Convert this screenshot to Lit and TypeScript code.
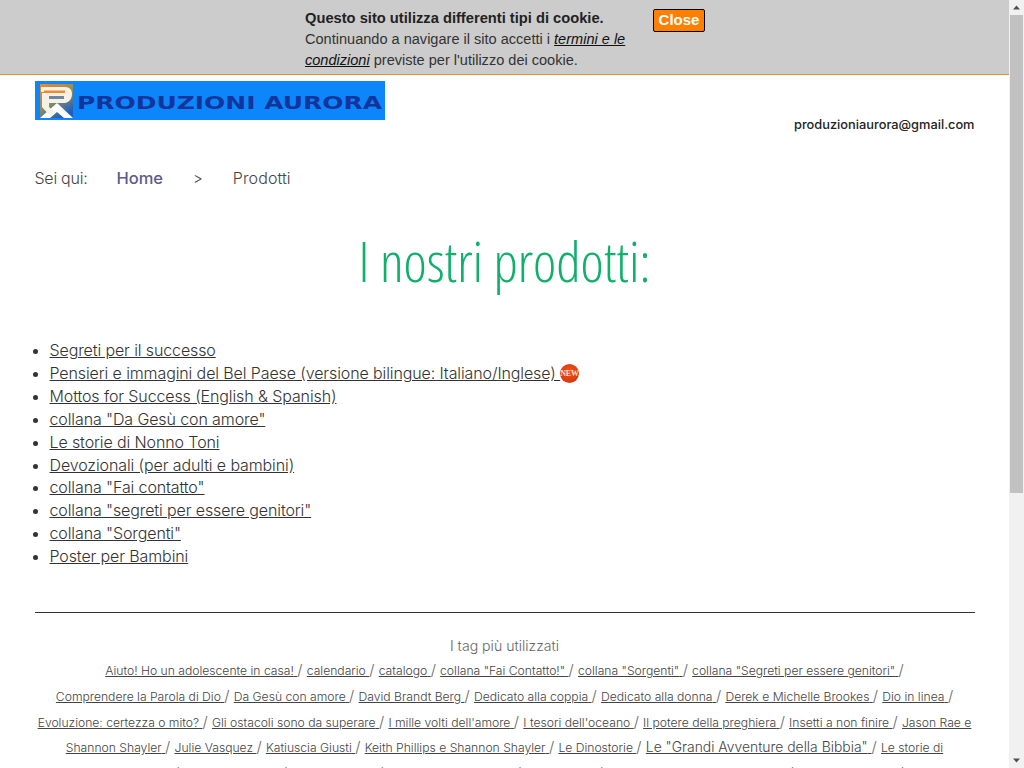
import { LitElement, css, html, svg } from "lit";
import { customElement } from "lit/decorators.js";

const products = [
  "Segreti per il successo",
  "Pensieri e immagini del Bel Paese (versione bilingue: Italiano/Inglese) ",
  "Mottos for Success (English & Spanish)",
  'collana "Da Gesù con amore"',
  "Le storie di Nonno Toni",
  "Devozionali (per adulti e bambini)",
  'collana "Fai contatto"',
  'collana "segreti per essere genitori"',
  'collana "Sorgenti"',
  "Poster per Bambini",
];

// each row of the tag cloud, the wrap points are the ones of the reference
const tagRows = [
  ["Aiuto! Ho un adolescente in casa!", "calendario", "catalogo", 'collana "Fai Contatto!"', 'collana "Sorgenti"', 'collana "Segreti per essere genitori"'],
  ["Comprendere la Parola di Dio", "Da Gesù con amore", "David Brandt Berg", "Dedicato alla coppia", "Dedicato alla donna", "Derek e Michelle Brookes", "Dio in linea"],
  ["Evoluzione: certezza o mito?", "Gli ostacoli sono da superare", "I mille volti dell'amore", "I tesori dell'oceano", "Il potere della preghiera", "Insetti a non finire", "Jason Rae e"],
  ["Shannon Shayler", "Julie Vasquez", "Katiuscia Giusti", "Keith Phillips e Shannon Shayler", "Le Dinostorie", 'Le "Grandi Avventure della Bibbia"', "Le storie di"],
  ["Nonno Toni", "Libri per bambini", "Maria Fontaine", "Motivazione per adulti", "Michael Roy", "Pensieri positivi per ogni giorno", "Peter Amsterdam"],
];

const logoMark = svg`
  <defs>
    <linearGradient id="mark" x1="0" y1="0" x2="0.6" y2="1">
      <stop offset="0" stop-color="#ee8a2a"></stop>
      <stop offset="0.55" stop-color="#8f8f5a"></stop>
      <stop offset="1" stop-color="#1f5fc0"></stop>
    </linearGradient>
    <radialGradient id="badge" cx="0.5" cy="0.4" r="0.6">
      <stop offset="0" stop-color="#f0541e"></stop>
      <stop offset="1" stop-color="#d9360f"></stop>
    </radialGradient>
  </defs>
  <rect x="5" y="3" width="33" height="34" fill="url(#mark)"></rect>
  <path d="M6 6h24c5 0 7 3 7 7s-2 8-7 9H14v4H7V12h23v-1H6z" fill="#f6f1e6"></path>
  <path d="M9 9.5h21v2.5H9z" fill="#ee8a2a"></path>
  <path d="M14 15h15v3H14z" fill="#6f86a0"></path>
  <path d="M5 37l17-15 16 15H29l-7-6-7 6z" fill="#fff"></path>
  <path d="M7 26h7l6 5-5 4z" fill="#f6f1e6"></path>
`;

@customElement("app-root")
export class AppRoot extends LitElement {
  static styles = css`
    :host {
      display: block;
      height: 768px;
      overflow: hidden;
      font-family: Inter, Lato, sans-serif;
      font-weight: 300;
      color: #333;
      background: #fff;
    }
    .frame {
      display: flex;
      height: 768px;
    }
    .page {
      flex: 1;
      min-width: 0;
      overflow: hidden;
    }
    .scrollbar {
      width: 15px;
      background: #f1f1f1;
      display: flex;
      flex-direction: column;
      align-items: center;
    }
    .scrollbar svg {
      flex: none;
      display: block;
    }
    .thumb {
      width: 13px;
      height: 478px;
      background: #c1c1c1;
    }
    .spacer {
      flex: 1;
    }
    .cookie {
      height: 75px;
      background: #ccc;
      border-bottom: 1px solid #e0902a;
      display: flex;
      padding: 8px 0 0 305px;
      box-sizing: border-box;
      font: 14.55px/21px "Liberation Sans", Arial, sans-serif;
      color: #333;
    }
    .cookie-text {
      width: 340px;
    }
    .cookie-text b {
      color: #222;
      font-size: 14.7px;
    }
    .cookie-text a {
      color: #111;
      font-style: italic;
      text-decoration: underline;
    }
    .close {
      align-self: flex-start;
      margin: 1px 0 0 8px;
      height: 23px;
      width: 52px;
      padding: 0 0 2px;
      background: #ff8000;
      border: 1px solid #000;
      border-radius: 2px;
      color: #fff;
      font: bold 15px "Liberation Sans", Arial, sans-serif;
    }
    .content {
      width: 940px;
      margin: 0 auto;
    }
    .top {
      display: flex;
      justify-content: space-between;
      align-items: flex-end;
      padding-top: 6px;
    }
    .logo {
      display: block;
      width: 350px;
      height: 39px;
    }
    .mail {
      font-size: 12.8px;
      font-weight: 500;
      color: #222;
      line-height: 16px;
      margin-bottom: -13px;
    }
    .crumbs {
      display: flex;
      align-items: baseline;
      margin-top: 47px;
      font-size: 16px;
      line-height: 22px;
      color: #444;
    }
    .crumbs .here {
      letter-spacing: -0.25px;
    }
    .crumbs a {
      color: #5b5b8f;
      font-size: 16.5px;
      font-weight: 500;
      text-decoration: none;
      margin-left: 29px;
    }
    .crumbs .sep {
      font-size: 15px;
      margin: 0 30px;
    }
    .crumbs .last {
      letter-spacing: 0.1px;
    }
    h1 {
      margin: 37px 0 0;
      font-family: "Open Sans", sans-serif;
      font-weight: 300;
      font-size: 55.4px;
      line-height: 68px;
      font-stretch: 75%;
      color: #0fb06a;
      text-align: center;
    }
    ul {
      margin: 44.3px 0 0;
      padding: 0 0 0 15px;
      font-size: 16px;
      letter-spacing: -0.11px;
      line-height: 22.85px;
      color: #333;
    }
    li a {
      color: #333;
      text-decoration: underline;
    }
    .new {
      display: inline-block;
      vertical-align: -4px;
      width: 19px;
      height: 19px;
    }
    hr {
      margin: 44.7px 0 0;
      border: 0;
      border-top: 1px solid #333;
    }
    .tags {
      margin-top: 21px;
      text-align: center;
      color: #666;
    }
    .tags-title {
      font-size: 14.1px;
      line-height: 24px;
    }
    .tag-row {
      font-size: 12.15px;
      line-height: 25.6px;
      white-space: nowrap;
    }
    .tag-row a {
      color: #444;
      text-decoration: underline;
      white-space: pre;
    }
    .tag-row a.big {
      font-size: 13.9px;
      line-height: 1;
    }
    .tag-row .slash {
      font-size: 15px;
      line-height: 1;
    }
  `;

  render() {
    return html`
      <div class="frame">
        <div class="page">
          <div class="cookie">
            <div class="cookie-text">
              <b>Questo sito utilizza differenti tipi di cookie.</b><br />
              Continuando a navigare il sito accetti i
              <a href="#">termini e le condizioni</a> previste per l'utilizzo dei cookie.
            </div>
            <button class="close">Close</button>
          </div>
          <div class="content">
            <div class="top">
              <svg class="logo" viewBox="0 0 350 39">
                <rect width="350" height="39" fill="#0d86fb"></rect>
                ${logoMark}
                <text x="42" y="28" textLength="305" lengthAdjust="spacingAndGlyphs"
                  font-family="DejaVu Sans" font-weight="700" font-size="17" fill="#12359c">PRODUZIONI AURORA</text>
              </svg>
              <span class="mail">produzioniaurora@gmail.com</span>
            </div>
            <div class="crumbs">
              <span class="here">Sei qui:</span>
              <a href="#">Home</a>
              <span class="sep">&gt;</span>
              <span class="last">Prodotti</span>
            </div>
            <h1>I nostri prodotti:</h1>
            <ul>
              ${products.map(
                (name, i) => html`<li>
                  <a href="#">${name}</a>${i === 1
                    ? html`<svg class="new" viewBox="0 0 18 18">
                        <circle cx="9" cy="9" r="9" fill="url(#badge)"></circle>
                        <text x="9" y="11.5" text-anchor="middle" font-family="Liberation Serif" font-size="7.5" font-weight="700" fill="#ffe2cc">NEW</text>
                      </svg>`
                    : ""}
                </li>`
              )}
            </ul>
            <hr />
            <div class="tags">
              <div class="tags-title">I tag più utilizzati</div>
              ${tagRows.map(
                (row) => html`<div class="tag-row">
                  ${row.map((tag) => {
                    const cut = /( e| di)$/.test(tag);
                    return html`<a href="#" class=${tag.startsWith('Le "Grandi') ? "big" : ""}>${tag}${cut ? "" : " "}</a>${cut
                      ? ""
                      : html`<span class="slash">/ </span>`}`;
                  })}
                </div>`
              )}
            </div>
          </div>
        </div>
        <div class="scrollbar">
          <svg width="15" height="15" viewBox="0 0 15 15"><path d="M4 9.5l3.5-4 3.5 4z" fill="#505050"></path></svg>
          <div class="thumb"></div>
          <div class="spacer"></div>
          <svg width="15" height="15" viewBox="0 0 15 15"><path d="M4 5.5l3.5 4 3.5-4z" fill="#505050"></path></svg>
        </div>
      </div>
    `;
  }
}
